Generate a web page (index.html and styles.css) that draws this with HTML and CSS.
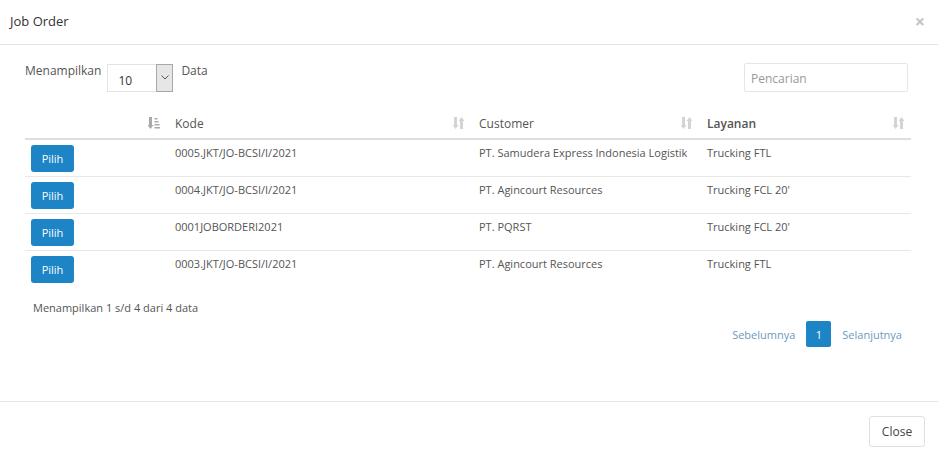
FILE: index.html
```html
<!DOCTYPE html>
<html>
<head>
<meta charset="utf-8">
<link rel="stylesheet" href="styles.css">
</head>
<body>
<div class="modal">
  <div class="modal-header">
    <span class="title">Job Order</span>
    <span class="close-x">&times;</span>
  </div>
  <div class="modal-body">
    <div class="toolbar">
      <div class="length">
        <span class="lbl">Menampilkan</span>
        <div class="select">
          <span class="sel-val">10</span>
          <span class="sel-arrow"><svg width="8" height="5" viewBox="0 0 8 5"><path d="M0.5 0.5 L4 4 L7.5 0.5" fill="none" stroke="#555" stroke-width="1"/></svg></span>
        </div>
        <span class="lbl">Data</span>
      </div>
      <div class="search">Pencarian</div>
    </div>
    <table class="grid">
      <colgroup>
        <col class="c1"><col class="c2"><col class="c3"><col class="c4">
      </colgroup>
      <thead>
        <tr>
          <th><span class="sort dark"><svg width="12" height="12" viewBox="0 0 12 12"><path d="M1 0 H4 V8 H5.5 L2.5 12 L-0.5 8 H1 Z" fill="#aaa"/><rect x="6.5" y="1" width="3" height="1.5" fill="#aaa"/><rect x="6.5" y="4" width="4" height="1.5" fill="#aaa"/><rect x="6.5" y="7" width="5" height="1.5" fill="#aaa"/><rect x="6.5" y="10" width="5.5" height="1.5" fill="#aaa"/></svg></span></th>
          <th><span class="htxt">Kode</span><span class="sort"><svg width="11" height="12" viewBox="0 0 11 12"><path d="M1 0 H4 V8 H5.5 L2.5 12 L-0.5 8 H1 Z" fill="#d4d4d4"/><path d="M7 12 H10 V4 H11.5 L8.5 0 L5.5 4 H7 Z" fill="#d4d4d4"/></svg></span></th>
          <th><span class="htxt">Customer</span><span class="sort"><svg width="11" height="12" viewBox="0 0 11 12"><path d="M1 0 H4 V8 H5.5 L2.5 12 L-0.5 8 H1 Z" fill="#d4d4d4"/><path d="M7 12 H10 V4 H11.5 L8.5 0 L5.5 4 H7 Z" fill="#d4d4d4"/></svg></span></th>
          <th><span class="htxt bold">Layanan</span><span class="sort"><svg width="11" height="12" viewBox="0 0 11 12"><path d="M1 0 H4 V8 H5.5 L2.5 12 L-0.5 8 H1 Z" fill="#d4d4d4"/><path d="M7 12 H10 V4 H11.5 L8.5 0 L5.5 4 H7 Z" fill="#d4d4d4"/></svg></span></th>
        </tr>
      </thead>
      <tbody>
        <tr><td class="btncell"><button class="pilih">Pilih</button></td><td>0005.JKT/JO-BCSI/I/2021</td><td>PT. Samudera Express Indonesia Logistik</td><td>Trucking FTL</td></tr>
        <tr><td class="btncell"><button class="pilih">Pilih</button></td><td>0004.JKT/JO-BCSI/I/2021</td><td>PT. Agincourt Resources</td><td>Trucking FCL 20'</td></tr>
        <tr><td class="btncell"><button class="pilih">Pilih</button></td><td>0001JOBORDERI2021</td><td>PT. PQRST</td><td>Trucking FCL 20'</td></tr>
        <tr><td class="btncell"><button class="pilih">Pilih</button></td><td>0003.JKT/JO-BCSI/I/2021</td><td>PT. Agincourt Resources</td><td>Trucking FTL</td></tr>
      </tbody>
    </table>
    <div class="info">Menampilkan 1 s/d 4 dari 4 data</div>
    <div class="paging">
      <span class="plink">Sebelumnya</span>
      <span class="pcur">1</span>
      <span class="plink">Selanjutnya</span>
    </div>
  </div>
  <div class="modal-footer">
    <button class="closebtn">Close</button>
  </div>
</div>
</body>
</html>
```
FILE: styles.css
```css
* { box-sizing: border-box; }
html, body { margin: 0; padding: 0; background: #fff; }
body { font-family: "Open Sans", "Liberation Sans", sans-serif; color: #555; width: 938px; height: 459px; overflow: hidden; }
.modal { width: 938px; }
.modal-header { height: 45px; border-bottom: 1px solid #e5e5e5; display: flex; align-items: center; justify-content: space-between; padding: 0 13px 2px 10px; }
.title { font-size: 13px; color: #333; }
.close-x { font-size: 18px; color: #c4c4c4; font-weight: bold; line-height: 1; margin-top: -1px; }
.modal-body { height: 356px; padding: 18px 27px 0 25px; }
.toolbar { display: flex; justify-content: space-between; align-items: flex-start; }
.length { display: flex; align-items: flex-start; }
.lbl { font-size: 12px; line-height: 16px; }
.select { margin: 1px 8px 0 6px; width: 66px; height: 28px; border: 1px solid #e3e3e3; display: flex; align-items: center; justify-content: space-between; }
.sel-val { font-size: 12px; color: #333; padding-left: 10px; padding-top: 4px; }
.sel-arrow { width: 17px; height: 28px; margin-top: -1px; margin-right: -1px; background: #e6e6e6; border: 1px solid #a8a8a8; display: flex; align-items: center; justify-content: center; }
.search { width: 164px; height: 29px; margin-right: 3px; border: 1px solid #e6e6e6; border-radius: 2px; font-size: 12px; color: #999; padding: 6px 0 0 6px; }
.grid { width: 886px; margin-top: 15px; border-collapse: collapse; table-layout: fixed; }
.c1 { width: 142px; } .c2 { width: 304px; } .c3 { width: 228px; } .c4 { width: 212px; }
.grid th { height: 32px; border-bottom: 2px solid #dedede; font-size: 12px; font-weight: normal; color: #555; text-align: left; padding: 1px 8px 0 8px; vertical-align: middle; }
.grid th { position: relative; }
.htxt.bold { font-weight: 600; }
.sort { position: absolute; right: 7px; top: 10px; line-height: 0; }
.sort.dark { right: 7px; }
.grid td { height: 37px; border-bottom: 1px solid #e8e8e8; font-size: 11px; line-height: 14px; color: #555; padding: 6px 8px 0 8px; vertical-align: top; white-space: nowrap; }
.grid tbody tr:last-child td { border-bottom: none; }
.grid td.btncell { padding: 5px 0 0 6px; }
.pilih { width: 43px; height: 27px; background: #1d84c6; color: #fff; border: none; border-radius: 3px; font-family: inherit; font-size: 11px; padding: 0; }
.info { font-size: 11px; line-height: 14px; margin-top: 14px; padding-left: 8px; }
.paging { display: flex; justify-content: flex-end; align-items: center; margin-top: 6px; padding-right: 9px; gap: 0; }
.plink { font-size: 11px; color: #6d9abf; }
.pcur { width: 25px; height: 26px; background: #1d84c6; color: #fff; border-radius: 2px; font-size: 11px; display: flex; align-items: center; justify-content: center; margin: 0 11px; }
.modal-footer { border-top: 1px solid #e5e5e5; display: flex; justify-content: flex-end; padding: 14px 13px 0 0; }
.closebtn { width: 56px; height: 31px; background: #fff; border: 1px solid #e0e0e0; border-radius: 3px; font-family: inherit; font-size: 12px; color: #444; padding: 0; }
```
